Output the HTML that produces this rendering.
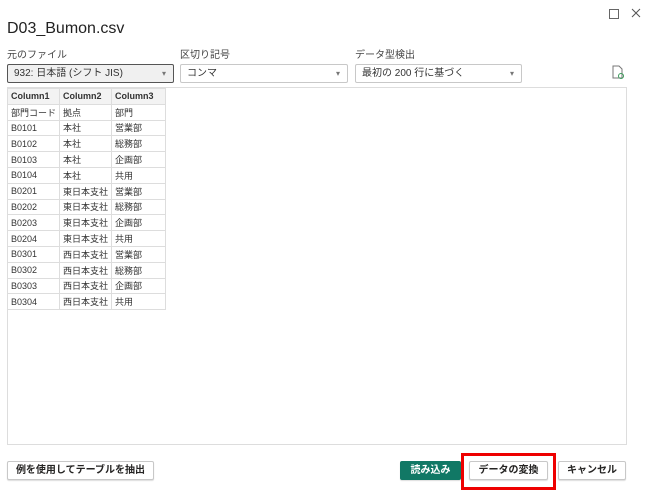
<html><head><style>
body{margin:0;width:648px;height:497px;background:#fff;font-family:"Liberation Sans","Noto Sans CJK JP",sans-serif;color:#252423;position:relative;overflow:hidden}
.a{position:absolute}
.lbl{font-size:10px;color:#444;top:50px;line-height:12px}
.dd{top:64px;height:19px;border:1px solid #c8c8c8;border-radius:2px;box-sizing:border-box;font-size:10px;line-height:17px;padding-left:6px;color:#333}
.dd:after{content:"▾";position:absolute;right:7px;top:0;font-size:8px;color:#777}
table{border-collapse:collapse;font-size:9px}
td{border:1px solid #ddd;height:15.8px;padding:0 0 0 3px;box-sizing:border-box;color:#333}
.btn{top:461px;height:19px;border:1px solid #c8c8c8;border-radius:2px;box-sizing:border-box;font-size:10px;font-weight:bold;text-align:center;line-height:17px;background:#fff;box-shadow:0 1px 1px #ddd}
</style></head><body>
<div class="a" style="left:7px;top:20px;font-size:16px;color:#222">D03_Bumon.csv</div>
<div class="a" style="left:609px;top:9px;width:8px;height:8px;border:1px solid #666"></div>
<svg class="a" style="left:631px;top:8px" width="10" height="10"><path d="M1 1L9 9M9 1L1 9" stroke="#555" stroke-width="1"/></svg>
<div class="a lbl" style="left:7px">元のファイル</div>
<div class="a lbl" style="left:180px">区切り記号</div>
<div class="a lbl" style="left:355px">データ型検出</div>
<div class="a dd" style="left:7px;width:167px;background:#f0f0f0;border-color:#555">932: 日本語 (シフト JIS)</div>
<div class="a dd" style="left:180px;width:168px">コンマ</div>
<div class="a dd" style="left:355px;width:167px">最初の 200 行に基づく</div>
<svg class="a" style="left:612px;top:65px" width="12" height="14"><path d="M1 1h6l3 3v9H1z" fill="none" stroke="#777"/><circle cx="9" cy="11" r="2.5" fill="none" stroke="#3a9a5a"/></svg>
<div class="a" style="left:7px;top:87px;width:620px;height:358px;border:1px solid #ddd;box-sizing:border-box"></div>
<table class="a" style="left:7px;top:88px">
<tr style="background:#f3f3f3;font-weight:bold"><td style="width:52px">Column1</td><td style="width:52px">Column2</td><td style="width:54px">Column3</td></tr>
<tr><td>部門コード</td><td>拠点</td><td>部門</td></tr>
<tr><td>B0101</td><td>本社</td><td>営業部</td></tr>
<tr><td>B0102</td><td>本社</td><td>総務部</td></tr>
<tr><td>B0103</td><td>本社</td><td>企画部</td></tr>
<tr><td>B0104</td><td>本社</td><td>共用</td></tr>
<tr><td>B0201</td><td>東日本支社</td><td>営業部</td></tr>
<tr><td>B0202</td><td>東日本支社</td><td>総務部</td></tr>
<tr><td>B0203</td><td>東日本支社</td><td>企画部</td></tr>
<tr><td>B0204</td><td>東日本支社</td><td>共用</td></tr>
<tr><td>B0301</td><td>西日本支社</td><td>営業部</td></tr>
<tr><td>B0302</td><td>西日本支社</td><td>総務部</td></tr>
<tr><td>B0303</td><td>西日本支社</td><td>企画部</td></tr>
<tr><td>B0304</td><td>西日本支社</td><td>共用</td></tr>
</table>
<div class="a btn" style="left:7px;width:147px">例を使用してテーブルを抽出</div>
<div class="a btn" style="left:400px;width:61px;background:#117865;border-color:#117865;color:#fff">読み込み</div>
<div class="a" style="left:461px;top:453px;width:95px;height:37px;border:3px solid #e00;box-sizing:border-box"></div>
<div class="a btn" style="left:469px;width:79px">データの変換</div>
<div class="a btn" style="left:558px;width:68px">キャンセル</div>
</body></html>
